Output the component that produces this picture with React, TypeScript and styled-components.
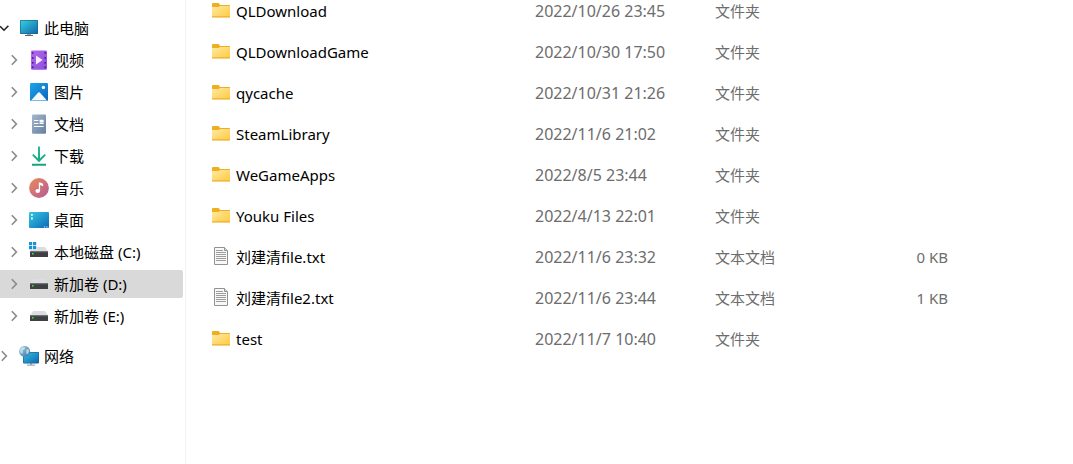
import React from "react";
import styled, { createGlobalStyle } from "styled-components";

const GlobalStyle = createGlobalStyle`
  *, *::before, *::after { box-sizing: border-box; }
  body {
    margin: 0;
    background: #ffffff;
    color: #000000;
    font-family: "Noto Sans", "Noto Sans CJK SC", sans-serif;
    font-size: 15px;
  }
`;

const Window = styled.div`
  display: flex;
  min-height: 100vh;
  overflow-x: hidden;
`;

const Sidebar = styled.nav`
  flex: 0 0 186px;
  padding: 14px 2px 14px 0;
  border-right: 1px solid #f3f3f3;
`;

const Tree = styled.ul`
  display: flex;
  flex-direction: column;
  gap: 4px;
  margin: 0;
  padding: 0;
  list-style: none;
`;

const TreeItem = styled.li<{ $nested?: boolean; $selected?: boolean; $apart?: boolean }>`
  display: flex;
  align-items: center;
  height: 28px;
  margin-top: ${(p) => (p.$apart ? "8px" : "0")};
  padding-left: ${(p) => (p.$nested ? "10px" : "0")};
  border-radius: 0 2px 2px 0;
  background: ${(p) => (p.$selected ? "#d9d9d9" : "transparent")};
`;

const Toggle = styled.button`
  display: flex;
  align-items: center;
  flex: 0 0 19px;
  height: 28px;
  padding: 0;
  border: 0;
  background: transparent;
`;

const TreeLink = styled.a`
  display: flex;
  align-items: center;
  gap: 5px;
  color: inherit;
  font-size: 15px;
  line-height: 28px;
  white-space: nowrap;
  text-decoration: none;
`;

const Main = styled.main`
  flex: 1;
  min-width: 0;
  padding-left: 26px;
`;

const FileTable = styled.table`
  width: 100%;
  table-layout: fixed;
  border-collapse: collapse;
`;

const Column = styled.col<{ $width?: number }>`
  width: ${(p) => (p.$width ? `${p.$width}px` : "auto")};
`;

const Cell = styled.td<{ $align?: "right"; $large?: boolean }>`
  padding: 0 0 18px;
  color: #6d6d6d;
  font-size: ${(p) => (p.$large ? "16px" : "15px")};
  line-height: 23px;
  text-align: ${(p) => p.$align ?? "left"};
  white-space: nowrap;
`;

const FileLink = styled.a`
  display: flex;
  align-items: center;
  gap: 6px;
  color: #000000;
  text-decoration: none;
`;

const Chevron = ({ open }: { open?: boolean }) => (
  <svg width="9" height="12" viewBox="0 0 9 12" fill="none" strokeWidth="1.6" aria-hidden="true">
    {open ? (
      <path d="M0 4.2 4 8.2 8.4 3.8" stroke="#222222" />
    ) : (
      <path d="M1.8 1.2 6.4 6 1.8 10.8" stroke="#8a8a8a" />
    )}
  </svg>
);

const Icon20 = ({ children }: { children: React.ReactNode }) => (
  <svg width="20" height="20" viewBox="0 0 20 20" aria-hidden="true">
    {children}
  </svg>
);

const Gradient = ({ id, from, to }: { id: string; from: string; to: string }) => (
  <linearGradient id={id} x1="0" y1="0" x2="1" y2="1">
    <stop offset="0" stopColor={from} />
    <stop offset="1" stopColor={to} />
  </linearGradient>
);

const PcIcon = () => (
  <Icon20>
    <Gradient id="pc" from="#35d0dc" to="#1267ae" />
    <path d="M8 15h4v2.2H8z" fill="#9ba3aa" />
    <path d="M6 17h8v1H6z" fill="#5d676f" />
    <rect x="1" y="2" width="18" height="14" rx="0.8" fill="#18608c" />
    <rect x="1.6" y="2.6" width="16.8" height="12.8" fill="url(#pc)" />
  </Icon20>
);

const VideoIcon = () => (
  <Icon20>
    <Gradient id="video" from="#b565ee" to="#8a50dc" />
    <rect x="2" y="0.4" width="16" height="19.4" rx="1.2" fill="url(#video)" />
    <g fill="#452080">
      {[2.2, 7.2, 12, 16.4].map((y) => (
        <React.Fragment key={y}>
          <rect x="3" y={y} width="1.6" height="1.6" />
          <rect x="15.4" y={y} width="1.6" height="1.6" />
        </React.Fragment>
      ))}
    </g>
    <path d="M7 5.6v9l6.6-4.5z" fill="#f4eefb" />
  </Icon20>
);

const PictureIcon = () => (
  <Icon20>
    <Gradient id="picture" from="#1ba6ea" to="#0c63bd" />
    <rect x="1" y="1" width="18" height="18" rx="1.2" fill="url(#picture)" />
    <circle cx="14.4" cy="5.4" r="1.7" fill="#ffffff" />
    <path d="M2 18.6 9.2 10.6q.8-.8 1.6 0L18 18.6z" fill="#f3f9fe" />
  </Icon20>
);

const DocumentIcon = () => (
  <Icon20>
    <Gradient id="document" from="#a5b9cd" to="#647f9f" />
    <rect x="3" y="0.4" width="14" height="19.4" rx="1.2" fill="url(#document)" />
    <path d="M5 6.5h4.4M5 9.5h4.4M5 12.5h9.6M10.6 9.5h4" stroke="#ffffff" strokeWidth="1.2" />
    <rect x="10.6" y="5.8" width="4" height="2.8" fill="#ffffff" />
  </Icon20>
);

const DownloadIcon = () => (
  <Icon20>
    <linearGradient id="download" gradientUnits="userSpaceOnUse" x1="0" y1="0" x2="0" y2="19">
      <stop offset="0" stopColor="#2cbd95" />
      <stop offset="1" stopColor="#12a383" />
    </linearGradient>
    <path
      d="M10 .4V14.6M3.8 8.6 10 14.8 16.2 8.6M3 18.8H17"
      fill="none"
      stroke="url(#download)"
      strokeWidth="2"
    />
  </Icon20>
);

const MusicIcon = () => (
  <Icon20>
    <Gradient id="music" from="#ee8a55" to="#b25a9b" />
    <circle cx="10" cy="10" r="9.9" fill="url(#music)" />
    <ellipse cx="8.7" cy="13" rx="2.3" ry="2.1" fill="#ffffff" />
    <path d="M9.8 4.6h1.3l3 1.2v2.4l-3-1.1V13H9.8z" fill="#ffffff" />
  </Icon20>
);

const DesktopIcon = () => (
  <Icon20>
    <Gradient id="desktop" from="#35c8e4" to="#0b68b5" />
    <rect x="0" y="2" width="20" height="16" rx="1" fill="url(#desktop)" />
    <path d="M2 4h1.8v1.8H2zM2 7.6h1.8v1.8H2z" fill="#e9fbff" />
    <path d="M15 16.4h1.3v1H15zM17.3 16.4h1.3v1h-1.3z" fill="#d7efff" />
  </Icon20>
);

const DriveShape = () => (
  <>
    <path d="M4.2 5h11.6L19 9.4H1z" fill="#dcdde1" />
    <rect x="1" y="9" width="18" height="6" rx="0.5" fill="#3f4042" />
    <rect x="1" y="9" width="18" height="1.2" fill="#717274" />
    <rect x="3" y="11" width="1.6" height="1.6" fill="#3ddc4b" />
  </>
);

const DriveIcon = () => (
  <Icon20>
    <DriveShape />
  </Icon20>
);

const SystemDriveIcon = () => (
  <Icon20>
    <DriveShape />
    <rect x="0" y="0" width="7.8" height="7.8" fill="#ffffff" />
    <path d="M0 0h3.2v3.2H0zM4 0h3.2v3.2H4zM0 4h3.2v3.2H0zM4 4h3.2v3.2H4z" fill="#1792d8" />
  </Icon20>
);

const NetworkIcon = () => (
  <Icon20>
    <Gradient id="network" from="#2fc0e0" to="#1068b0" />
    <Gradient id="globe" from="#b4d5e8" to="#2c6f9f" />
    <path d="M11 17h2v2h-2z" fill="#b3bac0" />
    <path d="M8 18.6h8v1H8z" fill="#8d969d" />
    <rect x="4" y="6" width="16" height="11.4" rx="0.8" fill="#17618f" />
    <rect x="4.6" y="6.6" width="14.8" height="10.2" fill="url(#network)" />
    <circle cx="5.6" cy="5.4" r="5.5" fill="url(#globe)" />
    <path
      d="M1.2 3.4 3.6 1l2.6.4-.6 2-2 1.2.4 2-1.2 1.2-1.6-2zM7.2 3.4l2.4-.2.6 2.4-1.6 3-1.4-1.2z"
      fill="#e4f1f8"
      opacity="0.65"
    />
  </Icon20>
);

const FolderIcon = () => (
  <svg width="18" height="21" viewBox="0 0 18 21" aria-hidden="true">
    <Gradient id="folder" from="#ffe9a6" to="#ffca3e" />
    <path d="M0 3.2Q0 2 1 2H6q.8 0 1.2.6L8 4H17.4q.6 0 .6.6V9H0z" fill="#efae20" />
    <path d="M0 6H6.6L8 5H18V15.6q0 .6-.6.6H.6q-.6 0-.6-.6z" fill="url(#folder)" />
    <path d="M0 15.2H18v.8q0 .4-.4.4H.4q-.4 0-.4-.4z" fill="#eeb02c" />
  </svg>
);

const TextFileIcon = () => (
  <svg width="18" height="21" viewBox="0 0 18 21" aria-hidden="true">
    <path d="M2.5.5H12.5L15.5 3.5V17.5H2.5z" fill="#f7f8f8" stroke="#929292" />
    <path d="M12.5.5V3.5H15.5" fill="#dddddd" stroke="#929292" />
    <path
      d="M4 3.5h7M4 5.5h10M4 7.5h10M4 9.5h10M4 11.5h10M4 13.5h10"
      stroke="#9d9d9d"
      strokeWidth="1"
    />
  </svg>
);

type Place = {
  label: string;
  icon: React.ComponentType;
  nested?: boolean;
  open?: boolean;
  selected?: boolean;
  apart?: boolean;
};

const places: Place[] = [
  { label: "此电脑", icon: PcIcon, open: true },
  { label: "视频", icon: VideoIcon, nested: true },
  { label: "图片", icon: PictureIcon, nested: true },
  { label: "文档", icon: DocumentIcon, nested: true },
  { label: "下载", icon: DownloadIcon, nested: true },
  { label: "音乐", icon: MusicIcon, nested: true },
  { label: "桌面", icon: DesktopIcon, nested: true },
  { label: "本地磁盘 (C:)", icon: SystemDriveIcon, nested: true },
  { label: "新加卷 (D:)", icon: DriveIcon, nested: true, selected: true },
  { label: "新加卷 (E:)", icon: DriveIcon, nested: true },
  { label: "网络", icon: NetworkIcon, apart: true },
];

type Entry = { name: string; date: string; type: string; size?: string };

const entries: Entry[] = [
  { name: "QLDownload", date: "2022/10/26 23:45", type: "文件夹" },
  { name: "QLDownloadGame", date: "2022/10/30 17:50", type: "文件夹" },
  { name: "qycache", date: "2022/10/31 21:26", type: "文件夹" },
  { name: "SteamLibrary", date: "2022/11/6 21:02", type: "文件夹" },
  { name: "WeGameApps", date: "2022/8/5 23:44", type: "文件夹" },
  { name: "Youku Files", date: "2022/4/13 22:01", type: "文件夹" },
  { name: "刘建清file.txt", date: "2022/11/6 23:32", type: "文本文档", size: "0 KB" },
  { name: "刘建清file2.txt", date: "2022/11/6 23:44", type: "文本文档", size: "1 KB" },
  { name: "test", date: "2022/11/7 10:40", type: "文件夹" },
];

export default function App() {
  return (
    <>
      <GlobalStyle />
      <Window>
        <Sidebar>
          <Tree>
            {places.map(({ label, icon: PlaceIcon, nested, open, selected, apart }) => (
              <TreeItem key={label} $nested={nested} $selected={selected} $apart={apart}>
                <Toggle type="button" aria-label={label} aria-expanded={!!open}>
                  <Chevron open={open} />
                </Toggle>
                <TreeLink href="#" aria-current={selected ? "page" : undefined}>
                  <PlaceIcon />
                  {label}
                </TreeLink>
              </TreeItem>
            ))}
          </Tree>
        </Sidebar>
        <Main>
          <FileTable>
            <colgroup>
              <Column $width={323} />
              <Column $width={180} />
              <Column $width={146} />
              <Column $width={87} />
              <Column />
            </colgroup>
            <tbody>
              {entries.map(({ name, date, type, size }) => (
                <tr key={name}>
                  <Cell>
                    <FileLink href="#">
                      {size ? <TextFileIcon /> : <FolderIcon />}
                      {name}
                    </FileLink>
                  </Cell>
                  <Cell $large>{date}</Cell>
                  <Cell>{type}</Cell>
                  <Cell $align="right">{size}</Cell>
                  <Cell />
                </tr>
              ))}
            </tbody>
          </FileTable>
        </Main>
      </Window>
    </>
  );
}
